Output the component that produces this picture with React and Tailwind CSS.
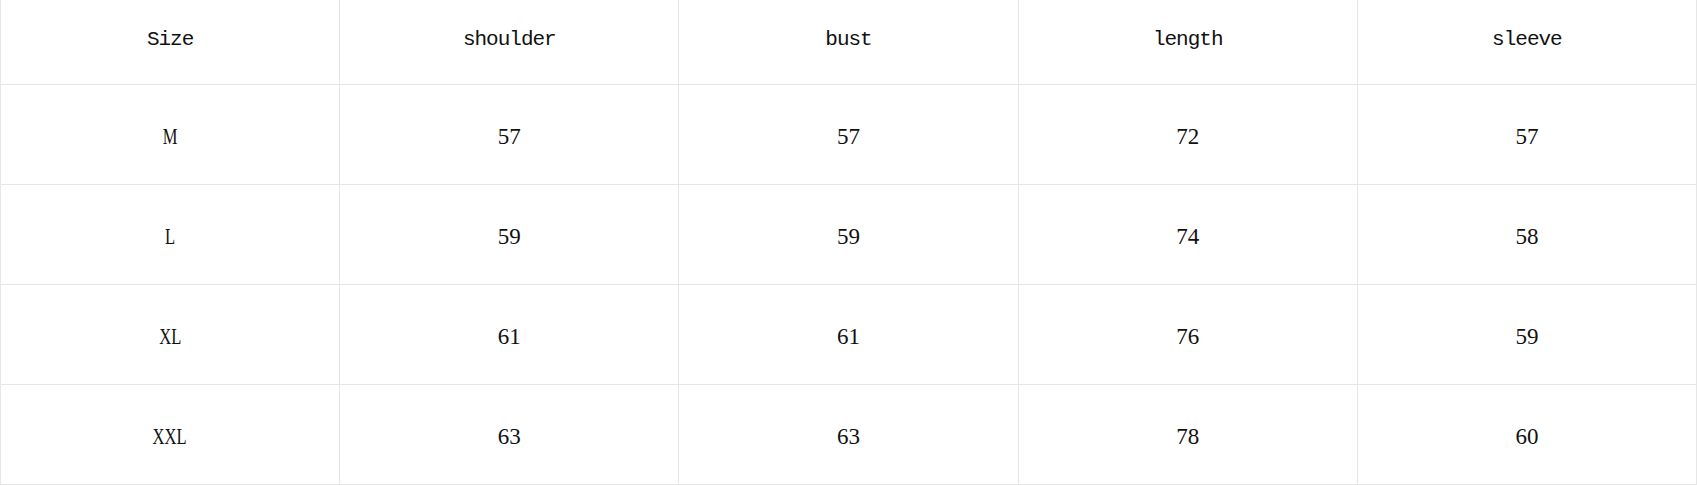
import React from 'react';

const headers = ['Size', 'shoulder', 'bust', 'length', 'sleeve'];

const rows = [
    ['M', '57', '57', '72', '57'],
    ['L', '59', '59', '74', '58'],
    ['XL', '61', '61', '76', '59'],
    ['XXL', '63', '63', '78', '60'],
];

const App = () => {
    return (
        <div className="w-[1697px] bg-white text-[#111]">
            <div className="grid grid-cols-5 border-l border-[#e6e6e6]">
                {headers.map((h) => (
                    <div
                        key={h}
                        className="h-[85px] flex items-center justify-center pb-[5px] border-r border-b border-[#e6e6e6] font-['Liberation_Mono',monospace] text-[21px] tracking-[-1px]"
                    >
                        {h}
                    </div>
                ))}
                {rows.map((row, i) =>
                    row.map((cell, j) => (
                        <div
                            key={`${i}-${j}`}
                            className="h-[100px] flex items-center justify-center pt-[6px] border-r border-b border-[#e6e6e6] font-['Liberation_Serif',serif] text-[23px]"
                        >
                            {j === 0 ? (
                                <span className="inline-block scale-x-[0.72]">{cell}</span>
                            ) : (
                                cell
                            )}
                        </div>
                    ))
                )}
            </div>
        </div>
    );
};

export default App;
